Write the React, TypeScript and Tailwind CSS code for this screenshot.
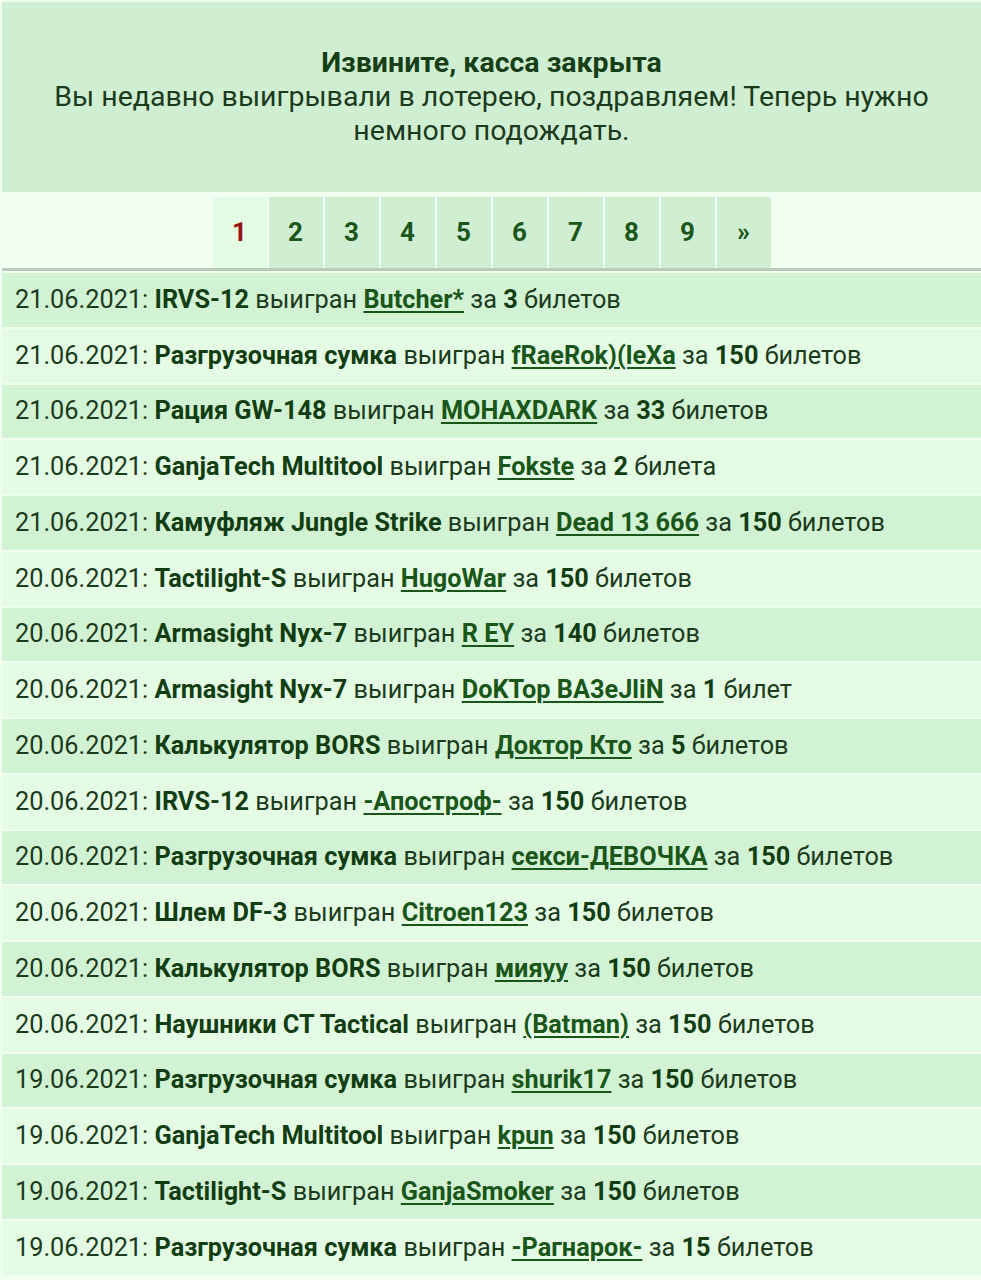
import React from "react";

type Win = {
  date: string;
  item: string;
  user: string;
  count: number;
  word: string;
};

const wins: Win[] = [
  { date: "21.06.2021", item: "IRVS-12", user: "Butcher*", count: 3, word: "билетов" },
  { date: "21.06.2021", item: "Разгрузочная сумка", user: "fRaeRok)(leXa", count: 150, word: "билетов" },
  { date: "21.06.2021", item: "Рация GW-148", user: "MOHAXDARK", count: 33, word: "билетов" },
  { date: "21.06.2021", item: "GanjaTech Multitool", user: "Fokste", count: 2, word: "билета" },
  { date: "21.06.2021", item: "Камуфляж Jungle Strike", user: "Dead 13 666", count: 150, word: "билетов" },
  { date: "20.06.2021", item: "Tactilight-S", user: "HugoWar", count: 150, word: "билетов" },
  { date: "20.06.2021", item: "Armasight Nyx-7", user: "R EY", count: 140, word: "билетов" },
  { date: "20.06.2021", item: "Armasight Nyx-7", user: "DoKTop BA3eJliN", count: 1, word: "билет" },
  { date: "20.06.2021", item: "Калькулятор BORS", user: "Доктор Кто", count: 5, word: "билетов" },
  { date: "20.06.2021", item: "IRVS-12", user: "-Апостроф-", count: 150, word: "билетов" },
  { date: "20.06.2021", item: "Разгрузочная сумка", user: "секси-ДЕВОЧКА", count: 150, word: "билетов" },
  { date: "20.06.2021", item: "Шлем DF-3", user: "Citroen123", count: 150, word: "билетов" },
  { date: "20.06.2021", item: "Калькулятор BORS", user: "мияуу", count: 150, word: "билетов" },
  { date: "20.06.2021", item: "Наушники CT Tactical", user: "(Batman)", count: 150, word: "билетов" },
  { date: "19.06.2021", item: "Разгрузочная сумка", user: "shurik17", count: 150, word: "билетов" },
  { date: "19.06.2021", item: "GanjaTech Multitool", user: "kpun", count: 150, word: "билетов" },
  { date: "19.06.2021", item: "Tactilight-S", user: "GanjaSmoker", count: 150, word: "билетов" },
  { date: "19.06.2021", item: "Разгрузочная сумка", user: "-Рагнарок-", count: 15, word: "билетов" },
];

const pages = ["1", "2", "3", "4", "5", "6", "7", "8", "9", "»"];

export default function App() {
  return (
    <div
      className="min-h-[1280px] bg-[#f1fff1] pl-[2px] pt-[2px] text-[#1c3a1c]"
      style={{ fontFamily: "Roboto, 'Noto Sans', sans-serif" }}
    >
      {/* Closed notice */}
      <div className="flex h-[190px] flex-col items-center justify-center bg-[#d0efd2] text-center text-[28.5px] leading-[34px]">
        <div className="font-bold text-[#173f17]">Извините, касса закрыта</div>
        <div className="max-w-[910px]">
          Вы недавно выигрывали в лотерею, поздравляем! Теперь нужно немного подождать.
        </div>
      </div>

      {/* Pager */}
      <div className="flex justify-center pt-[5px]">
        <div className="flex h-[71px] gap-[2px]">
          {pages.map((p, i) => (
            <a
              key={p}
              className={
                i === 0
                  ? "flex w-[54px] items-center justify-center bg-[#e4fbe4] text-[26px] font-bold text-[#9a1010]"
                  : "flex w-[54px] items-center justify-center bg-[#d0efd2] text-[26px] font-bold text-[#1b561b]"
              }
            >
              {p}
            </a>
          ))}
        </div>
      </div>
      <div className="h-[3px] bg-[#b7cbb7]" />

      {/* Recent winners */}
      <div className="flex flex-col gap-[2px] pt-[2px]">
        {wins.map((w, i) => (
          <div
            key={i}
            className={
              (i % 2 === 0 ? "bg-[#d1f2d3]" : "bg-[#e3fce3]") +
              " flex h-[53.75px] items-center pl-[13px] text-[25.3px] whitespace-nowrap"
            }
          >
            <span>{w.date}:&nbsp;</span>
            <b className="text-[#123d12]">{w.item}</b>
            <span>&nbsp;выигран&nbsp;</span>
            <a className="font-bold text-[#1a561a] underline decoration-2 underline-offset-[3px]">{w.user}</a>
            <span>&nbsp;за&nbsp;</span>
            <b className="text-[#123d12]">{w.count}</b>
            <span>&nbsp;{w.word}</span>
          </div>
        ))}
      </div>
    </div>
  );
}
